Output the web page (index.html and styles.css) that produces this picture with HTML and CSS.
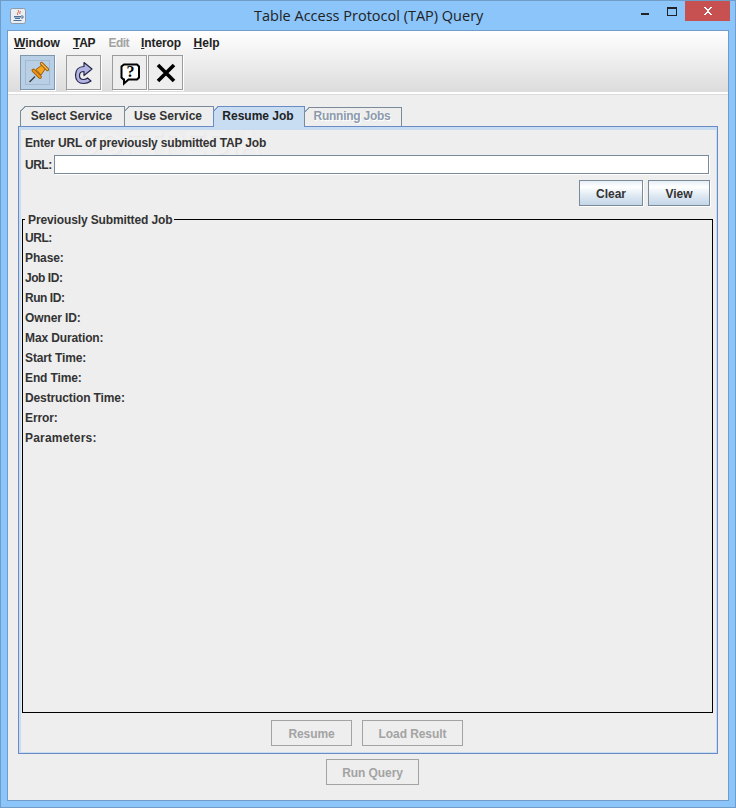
FILE: index.html
```html
<!DOCTYPE html>
<html lang="en">
<head>
<meta charset="utf-8">
<title>Table Access Protocol (TAP) Query</title>
<link rel="stylesheet" href="styles.css">
</head>
<body>
<div class="window">
  <header class="titlebar">
    <span class="app-icon">
      <svg width="16" height="16" viewBox="0 0 16 16">
        <rect x="0.5" y="0.5" width="15" height="15" rx="2" fill="#e8eef4" stroke="#8f9aa6"/>
        <path d="M8 2c2 2-2 3 0 5M10 3c1 1-1 2 0 3" fill="none" stroke="#d9542a" stroke-width="1"/>
        <path d="M4 8h7v1.500H4zM5 10h5v1H5zM3.500 12h8v1h-8z" fill="#4f7398"/>
        <path d="M11 8h2v2h-2" fill="none" stroke="#4f7398"/>
      </svg>
    </span>
    <h1 class="title">Table Access Protocol (TAP) Query</h1>
    <div class="controls">
      <span class="ctl ctl-min"><i></i></span>
      <span class="ctl ctl-max"><i></i></span>
      <span class="ctl ctl-close">
        <svg width="10" height="8" viewBox="0 0 10 8"><path d="M1 0h2v1h1v1h2V1h1V0h2v1H8v1H7v1H6v2h1v1h1v1h1v1H7V7H6V6H4v1H3v1H1V7h1V6h1V5h1V3H3V2H2V1H1z" fill="#fff"/></svg>
      </span>
    </div>
  </header>

  <div class="client">
    <div class="top">
      <nav class="menubar">
        <span class="menu"><u>W</u>indow</span>
        <span class="menu m-tap"><u>T</u>AP</span>
        <span class="menu disabled">Edit</span>
        <span class="menu"><u>I</u>nterop</span>
        <span class="menu"><u>H</u>elp</span>
      </nav>
      <div class="toolbar">
        <button class="tool active">
          <svg width="24" height="26" viewBox="0 0 24 26">
            <path d="M9 16.500L3.500 22" stroke="#3a3a3a" stroke-width="1.300" fill="none"/>
            <path d="M10 9.500L16 5l3.500 3.500L15 15z" fill="#f7a51e" stroke="#9a5c08"/>
            <path d="M15.500 3.500L21.500 9.500" stroke="#9a5c08" stroke-width="3.200" stroke-linecap="round"/>
            <path d="M15.500 3.500L21.500 9.500" stroke="#ffc04a" stroke-width="1.400" stroke-linecap="round"/>
            <path d="M7.500 10.500L14 17" stroke="#9a5c08" stroke-width="3.800" stroke-linecap="round"/>
            <path d="M7.500 10.500L14 17" stroke="#ef9310" stroke-width="2" stroke-linecap="round"/>
          </svg>
        </button>
        <button class="tool gap-a">
          <svg width="24" height="28" viewBox="0 0 24 28">
            <path d="M12 3.500L20 10l-8 6.500v-4C9 12.500 7.500 14 7.500 16.500s1.500 4 4 4c1.500 0 3-.5 4-1.500l3.500 3c-2 1.500-4.500 2.500-7.500 2.500-5 0-8-3.500-8-8.500s3-8.500 8.500-8.500z" fill="#b4b4e4" stroke="#25254a" stroke-width="1.200" stroke-linejoin="round"/>
          </svg>
        </button>
        <button class="tool gap-b">
          <svg width="24" height="26" viewBox="0 0 24 26">
            <path d="M6 4.500h13l2 2v11l-2 2H10.500L6 23.500v-4H5.500l-2-2v-11z" fill="#fff" stroke="#000" stroke-width="2"/>
            <text x="12.500" y="17" class="qmark">?</text>
          </svg>
        </button>
        <button class="tool gap-c">
          <svg width="22" height="22" viewBox="0 0 22 22"><path d="M3 3l16 16M19 3L3 19" stroke="#000" stroke-width="3.600"/></svg>
        </button>
      </div>
    </div>

    <main class="body">
      <div class="tabs">
        <span class="tab tab-1">Select Service</span>
        <span class="tab tab-2">Use Service</span>
        <span class="tab tab-3 selected">Resume Job</span>
        <span class="tab tab-4 off">Running Jobs</span>
      </div>

      <section class="pane">
        <span class="watermark">SOFTPEDIA</span>
        <p class="lead">Enter URL of previously submitted TAP Job</p>
        <div class="url-row">
          <label class="lbl">URL:</label>
          <div class="input"></div>
        </div>
        <div class="actions">
          <button class="btn btn-clear">Clear</button>
          <button class="btn btn-view">View</button>
        </div>
        <fieldset class="group">
          <legend class="legend">Previously Submitted Job</legend>
          <div class="field tight">URL:</div>
          <div class="field">Phase:</div>
          <div class="field tight">Job ID:</div>
          <div class="field tight">Run ID:</div>
          <div class="field">Owner ID:</div>
          <div class="field">Max Duration:</div>
          <div class="field">Start Time:</div>
          <div class="field">End Time:</div>
          <div class="field">Destruction Time:</div>
          <div class="field">Error:</div>
          <div class="field wide">Parameters:</div>
        </fieldset>
        <div class="pane-foot">
          <button class="btn dim btn-resume">Resume</button>
          <button class="btn dim btn-load">Load Result</button>
        </div>
      </section>

      <div class="foot">
        <button class="btn dim btn-run">Run Query</button>
      </div>
    </main>
  </div>
</div>
</body>
</html>
```
FILE: styles.css
```css
* { box-sizing: border-box; }
html, body { margin: 0; padding: 0; }
body {
  width: 736px;
  height: 808px;
  overflow: hidden;
  font: bold 12px/14px "Liberation Sans", Arial, sans-serif;
  color: #333;
}
button { font: inherit; color: inherit; margin: 0; padding: 1px 0 0; }

.window {
  width: 736px;
  height: 808px;
  display: flex;
  flex-direction: column;
  background: #8bc5fa;
  border: 1px solid #6f9cc8;
}

.titlebar {
  height: 29px;
  flex: none;
  display: flex;
  align-items: flex-start;
  position: relative;
}
.app-icon { display: block; margin: 7px 0 0 9px; width: 16px; height: 16px; }
.app-icon svg { display: block; }
.title {
  position: absolute;
  left: 253px;
  top: 5px;
  margin: 0;
  font: 400 14.500px/20px "Open Sans", "Noto Sans", sans-serif;
  color: #222;
  white-space: nowrap;
}
.controls { margin-left: auto; margin-right: 5px; display: flex; align-items: flex-start; }
.ctl { display: block; position: relative; }
.ctl-min { width: 26px; height: 20px; }
.ctl-min i { position: absolute; left: 8px; top: 12px; width: 8px; height: 2px; background: #222; }
.ctl-max { width: 18px; height: 20px; margin-right: 8px; }
.ctl-max i { position: absolute; left: 8px; top: 6px; width: 10px; height: 9px; border: 1px solid #222; border-top-width: 2px; }
.ctl-close { width: 45px; height: 20px; background: #c75050; display: flex; align-items: center; justify-content: center; }
.ctl-close svg { display: block; }

.client {
  width: 722px;
  height: 771px;
  margin-left: 6px;
  flex: none;
  display: flex;
  flex-direction: column;
  background: #eee;
  border: 1px solid #6f9cc8;
}

.top {
  height: 63px;
  flex: none;
  background: linear-gradient(#fff, #dcdcdc);
  border-bottom: 2px solid #fff;
  box-shadow: 0 1px 0 #dcdcdc;
}
.menubar { display: flex; height: 24px; padding: 5px 0 0 6px; }
.menu { margin-right: 13px; color: #222; }
.menu u { text-decoration: underline; }
.m-tap { letter-spacing: -0.2px; }
.menu.disabled { color: #a3a3a3; letter-spacing: -0.5px; margin-right: 12px; }
.menu:nth-child(4) { letter-spacing: -0.1px; margin-right: 12.500px; }

.toolbar { display: flex; padding-left: 12px; }
.tool {
  width: 35px;
  height: 35px;
  display: flex;
  align-items: center;
  justify-content: center;
  padding: 0;
  background: #eee;
  border: 1px solid #9b9b9b;
  box-shadow: 1px 1px 0 #fff;
}
.tool svg { display: block; }
.tool.active {
  background: #b9cfe5;
  border-color: #7f97ad;
  outline: 1px solid #a4bad0;
  outline-offset: -6px;
}
.gap-a { margin-left: 11px; }
.gap-b { margin-left: 11px; }
.gap-c { margin-left: 1px; }
.qmark { font: bold 16px "Liberation Serif", serif; text-anchor: middle; fill: #000; }

.body { flex: 1; padding: 12px 9px 0 10px; display: flex; flex-direction: column; }

.tabs { display: flex; height: 20px; flex: none; align-items: flex-end; position: relative; z-index: 1; padding-left: 2px; }
.tab {
  height: 20px;
  padding: 2px 2px 0 0;
  text-align: center;
  border: 1px solid #7a8a99;
  border-bottom: 0;
  position: relative;
  background: #eee;
  white-space: nowrap;
  clip-path: polygon(5px 0, 100% 0, 100% 100%, 0 100%, 0 5px);
}
.tab::before {
  content: "";
  position: absolute;
  left: -1px;
  top: -1px;
  width: 6px;
  height: 6px;
  background: linear-gradient(135deg, transparent 3.200px, #7a8a99 3.200px, #7a8a99 4.400px, transparent 4.400px);
}
.tab-1 { width: 105px; }
.tab-2 { width: 90px; margin-left: -1px; }
.tab-3 { width: 92px; margin-left: -1px; background: #c8ddf2; color: #222; border-color: #6a8bc4; height: 21px; margin-bottom: -1px; }
.tab-3::before { background: linear-gradient(135deg, transparent 3.200px, #6a8bc4 3.200px, #6a8bc4 4.400px, transparent 4.400px); }
.tab-4 { width: 98px; margin-left: -1px; color: #8c9bac; text-shadow: 1px 1px 0 #fff; height: 19px; padding-top: 1px; letter-spacing: -0.25px; }

.pane {
  width: 700px;
  height: 628px;
  flex: none;
  position: relative;
  display: flex;
  flex-direction: column;
  border: 1px solid #6a8bc4;
  box-shadow: inset 2px 3px 0 #c8ddf2, inset -1px -1px 0 #c8ddf2;
  padding: 9px 0 0 3px;
}
.watermark {
  position: absolute;
  left: 56px;
  top: 1px;
  font: bold 34px/30px "Liberation Sans", sans-serif;
  letter-spacing: -1px;
  color: #f0f0f0;
  text-shadow: 1px 1px 0 #e8e8e8;
  white-space: nowrap;
}
.lead { margin: 0 0 5px 3px; height: 14px; position: relative; letter-spacing: -0.17px; }
.url-row { display: flex; height: 19px; align-items: center; position: relative; padding-left: 3px; }
.lbl { width: 29px; flex: none; padding-top: 1px; letter-spacing: -0.5px; }
.input {
  width: 655px;
  height: 19px;
  background: #fff;
  border: 1px solid #7a8a99;
  box-shadow: 1px 1px 0 #fff;
}
.actions { display: flex; height: 26px; margin-top: 6px; padding-left: 557px; gap: 5px; }
.btn {
  height: 26px;
  background: linear-gradient(#e6eef6 0, #fff 25%, #dfe9f3 60%, #c4d6e8 100%);
  border: 1px solid #7a8a99;
  color: #333;
  box-shadow: 1px 1px 0 #fff;
}
.btn-clear { width: 64px; }
.btn-view { width: 62px; }
.btn.dim {
  background: transparent;
  border-color: #a3a3a3;
  color: #a3a3a3;
  box-shadow: none;
  letter-spacing: -0.08px;
}

.group {
  width: 691px;
  height: 502px;
  margin: 5px 0 0 0;
  padding: 1px 0 0 2px;
  border: 1px solid #000;
  min-width: 0;
}
.legend { padding: 2px 2px 0 3px; margin-left: 0; height: 16px; line-height: 14px; letter-spacing: -0.125px; }
.field { height: 20px; line-height: 20px; letter-spacing: -0.12px; }
.field.tight { letter-spacing: -0.45px; }
.field.wide { letter-spacing: 0.2px; }

.pane-foot { display: flex; height: 26px; margin-top: 7px; padding-left: 249px; gap: 10px; }
.btn-resume { width: 81px; }
.btn-load { width: 101px; }
.foot { padding: 5px 0 0 308px; }
.btn-run { width: 93px; }
```
